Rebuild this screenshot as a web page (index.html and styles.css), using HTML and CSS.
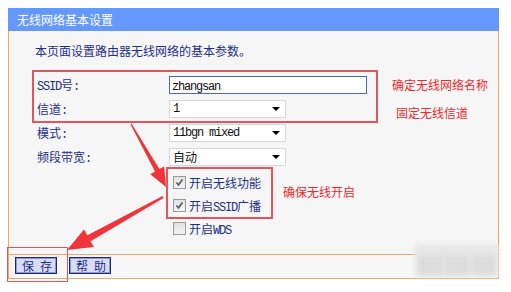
FILE: index.html
```html
<!DOCTYPE html>
<html lang="zh-CN">
<head>
    <meta charset="UTF-8">
    <title>无线网络基本设置</title>
    <link rel="stylesheet" href="styles.css">
</head>
<body>
    <div class="panel">
        <div class="head">无线网络基本设置</div>
        <div class="main">
            <p class="intro">本页面设置路由器无线网络的基本参数。</p>

            <div class="form">
                <div class="line">
                    <div class="mark-box basic">
                        <div class="row">
                            <span class="label"><span class="en">SSID</span>号<span class="en">:</span></span>
                            <div class="input"><span class="en">zhangsan</span></div>
                        </div>
                        <div class="row">
                            <span class="label">信道<span class="en">:</span></span>
                            <div class="select"><span class="en">1</span><i class="caret"></i></div>
                        </div>
                    </div>
                    <div class="notes">
                        <span class="note first">确定无线网络名称</span>
                        <span class="note second">固定无线信道</span>
                    </div>
                </div>

                <div class="row outer">
                    <span class="label">模式<span class="en">:</span></span>
                    <div class="select"><span class="en">11bgn mixed</span><i class="caret"></i></div>
                </div>
                <div class="row outer">
                    <span class="label">频段带宽<span class="en">:</span></span>
                    <div class="select">自动<i class="caret"></i></div>
                </div>

                <div class="line checks">
                    <div class="mark-box switches">
                        <div class="check-row">
                            <span class="box"><svg width="9" height="9" viewBox="0 0 9 9"><polyline points="1.5,4.5 3.5,7 7.5,1.5" fill="none" stroke="#4d5566" stroke-width="1.6"/></svg></span>
                            <span>开启无线功能</span>
                        </div>
                        <div class="check-row">
                            <span class="box"><svg width="9" height="9" viewBox="0 0 9 9"><polyline points="1.5,4.5 3.5,7 7.5,1.5" fill="none" stroke="#4d5566" stroke-width="1.6"/></svg></span>
                            <span>开启<span class="en">SSID</span>广播</span>
                        </div>
                    </div>
                    <span class="note">确保无线开启</span>
                </div>
                <div class="check-row wds">
                    <span class="box"></span>
                    <span>开启<span class="en">WDS</span></span>
                </div>
            </div>
        </div>
        <div class="foot">
            <button class="btn">保存</button>
            <button class="btn">帮助</button>
        </div>
    </div>

    <!-- annotations drawn over the screenshot -->
    <div class="save-mark"></div>
    <div class="watermark"><span></span><span></span><span></span></div>
    <svg class="arrows" width="511" height="292" viewBox="0 0 511 292">
        <polygon fill="#f0343a" points="130.4,124.3 155,171.5 150.2,174.2 166,187 164.2,166.4 159.4,169.1 131.6,123.7"/>
        <polygon fill="#f0343a" points="162.6,196 87.4,235.2 84,229.5 67,250 94,247 90.6,241.3 163.6,198"/>
    </svg>
</body>
</html>
```

FILE: styles.css
```css
body {
    margin: 0;
    padding: 8px 0 0 8px;
    background-color: #fff;
    font-family: "Noto Sans CJK SC", sans-serif;
    font-size: 12px;
    color: #1f2f86;
    position: relative;
    width: 503px;
    height: 284px;
    overflow: hidden;
}
.en {
    font-family: "Liberation Mono", monospace;
    font-size: 12px;
    letter-spacing: -1.2px;
}
.panel {
    width: 491px;
}
.head {
    height: 23px;
    line-height: 23px;
    background-color: #6498fd;
    color: #fff;
    padding-left: 9px;
}
.main {
    background-color: #f6f6f6;
    border-left: 1px solid #f3a65e;
    border-right: 1px solid #f3a65e;
    padding: 12px 0 14px;
}
.intro {
    margin: 0 0 11px 26px;
    line-height: 16px;
}
.form {
    margin-left: 23px;
}
.line {
    display: flex;
    align-items: flex-start;
}
.mark-box {
    border: 2px solid #e4555b;
    box-sizing: border-box;
}
.basic {
    width: 346px;
    padding: 1px 0 0 3px;
    margin-bottom: -2px;
}
.row {
    display: flex;
    align-items: center;
    height: 24px;
}
.row.outer {
    padding-left: 5px;
}
.label {
    width: 132px;
    flex: none;
}
.input {
    width: 198px;
    height: 18px;
    box-sizing: border-box;
    border: 1px solid #4a6ab3;
    background-color: #fff;
    color: #111;
    padding-left: 2px;
    line-height: 16px;
}
.select {
    width: 117px;
    height: 18px;
    box-sizing: border-box;
    border: 1px solid #d6d6d6;
    background-color: #fff;
    color: #111;
    padding-left: 3px;
    line-height: 16px;
    display: flex;
    align-items: center;
    justify-content: space-between;
    padding-right: 5px;
}
.caret {
    width: 0;
    height: 0;
    border-left: 4px solid transparent;
    border-right: 4px solid transparent;
    border-top: 4px solid #000;
}
.notes {
    display: flex;
    flex-direction: column;
    margin-left: 14px;
}
.note {
    color: #ea2a2f;
    line-height: 24px;
}
.note.first {
    margin-top: 3px;
}
.note.second {
    margin-top: 8px;
    padding-left: 4px;
    line-height: 16px;
}
.checks {
    margin: -2px 0 0 134px;
    align-items: center;
}
.switches {
    width: 107px;
    padding: 2px 0 0 5px;
    margin-bottom: -2px;
}
.checks .note {
    margin-left: 10px;
}
.check-row {
    display: flex;
    align-items: center;
    gap: 3px;
    height: 23px;
}
.check-row.wds {
    margin-left: 141px;
}
.box {
    width: 13px;
    height: 13px;
    box-sizing: border-box;
    border: 1px solid #9a9a9a;
    background: linear-gradient(#e2e2e2, #f4f4f4);
    display: flex;
    align-items: center;
    justify-content: center;
}
.foot {
    background-color: #f7f7f7;
    border: 1px solid #f3a65e;
    padding: 2px 0 0 6px;
    display: flex;
    align-items: flex-start;
    gap: 12px;
    height: 21px;
}
.btn {
    width: 42px;
    height: 17px;
    padding: 0 0 0 6px;
    border: 1px solid #1c286c;
    box-shadow: inset 0 0 0 1px #8f98d6;
    background-color: #d8dcf8;
    color: #1f2f86;
    font-family: "Noto Sans CJK SC", sans-serif;
    font-size: 12px;
    line-height: 15px;
    letter-spacing: 6px;
    white-space: nowrap;
    text-align: left;
}
.save-mark {
    position: absolute;
    left: 7px;
    top: 247px;
    width: 59px;
    height: 33px;
    border: 1.5px solid #e4555b;
}
.watermark {
    position: absolute;
    left: 415px;
    top: 245px;
    width: 84px;
    height: 32px;
    background-color: #e6e6e6;
    filter: blur(2px);
    display: flex;
    align-items: flex-end;
    gap: 4px;
    padding: 0 4px 3px;
    box-sizing: border-box;
}
.watermark span {
    flex: 1;
    height: 18px;
    background-color: #dcdcdc;
}
.arrows {
    position: absolute;
    left: 0;
    top: 0;
    pointer-events: none;
}
```
